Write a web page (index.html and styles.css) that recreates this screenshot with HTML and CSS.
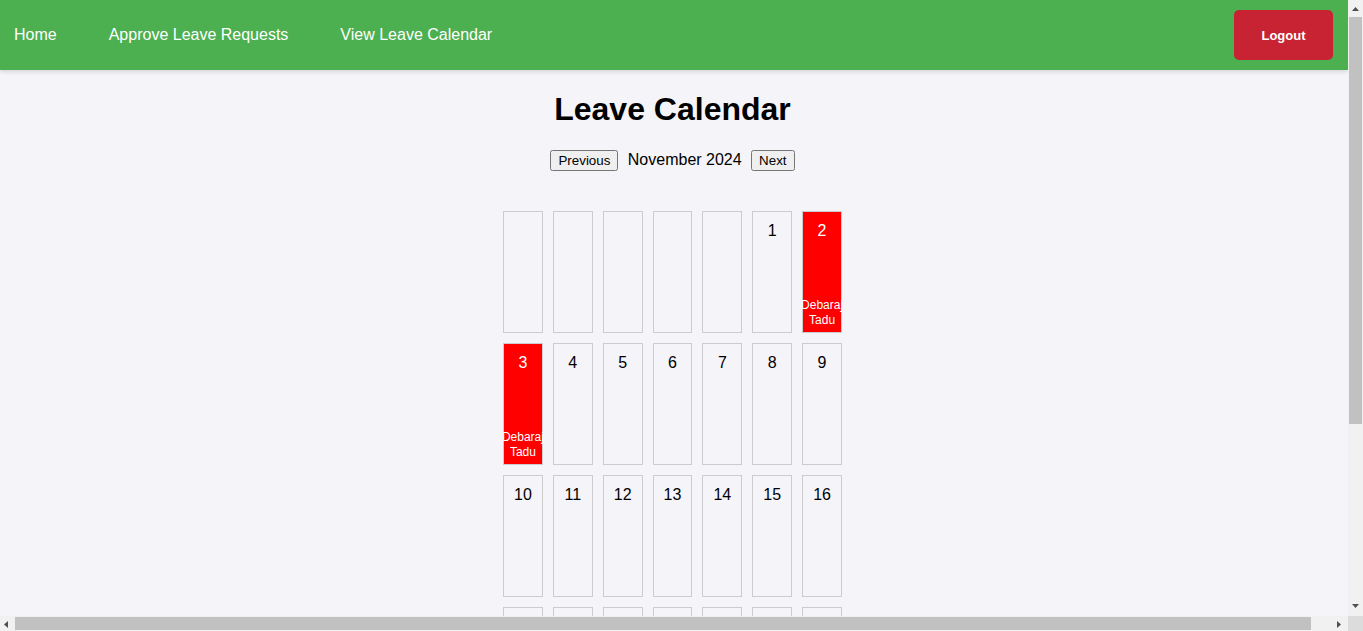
FILE: index.html
```html
<!DOCTYPE html>
<html lang="en">
<head>
<meta charset="utf-8">
<title>Leave Calendar</title>
<link rel="stylesheet" href="styles.css">
</head>
<body>
<nav class="navbar">
  <div class="nav-links">
    <a href="#">Home</a>
    <a href="#">Approve Leave Requests</a>
    <a href="#">View Leave Calendar</a>
  </div>
  <button class="logout">Logout</button>
</nav>
<main class="main">
  <h1 class="title">Leave Calendar</h1>
  <div class="controls">
    <button class="nav-btn">Previous</button>
    <span class="month">November 2024</span>
    <button class="nav-btn">Next</button>
  </div>
  <div class="calendar">
    <div class="day"></div>
    <div class="day"></div>
    <div class="day"></div>
    <div class="day"></div>
    <div class="day"></div>
    <div class="day"><div class="num">1</div></div>
    <div class="day leave"><div class="num">2</div><div class="name">Debaraj Tadu</div></div>
    <div class="day leave"><div class="num">3</div><div class="name">Debaraj Tadu</div></div>
    <div class="day"><div class="num">4</div></div>
    <div class="day"><div class="num">5</div></div>
    <div class="day"><div class="num">6</div></div>
    <div class="day"><div class="num">7</div></div>
    <div class="day"><div class="num">8</div></div>
    <div class="day"><div class="num">9</div></div>
    <div class="day"><div class="num">10</div></div>
    <div class="day"><div class="num">11</div></div>
    <div class="day"><div class="num">12</div></div>
    <div class="day"><div class="num">13</div></div>
    <div class="day"><div class="num">14</div></div>
    <div class="day"><div class="num">15</div></div>
    <div class="day"><div class="num">16</div></div>
    <div class="day"><div class="num">17</div></div>
    <div class="day"><div class="num">18</div></div>
    <div class="day"><div class="num">19</div></div>
    <div class="day"><div class="num">20</div></div>
    <div class="day"><div class="num">21</div></div>
    <div class="day"><div class="num">22</div></div>
    <div class="day"><div class="num">23</div></div>
    <div class="day"><div class="num">24</div></div>
    <div class="day"><div class="num">25</div></div>
    <div class="day"><div class="num">26</div></div>
    <div class="day"><div class="num">27</div></div>
    <div class="day"><div class="num">28</div></div>
    <div class="day"><div class="num">29</div></div>
    <div class="day"><div class="num">30</div></div>
  </div>
</main>

<div class="vscroll" aria-hidden="true">
  <svg class="arrow-up" width="7" height="4" viewBox="0 0 7 4"><polygon points="3.5,0 7,4 0,4" fill="#505050"/></svg>
  <div class="vthumb"></div>
  <svg class="arrow-down" width="7" height="4" viewBox="0 0 7 4"><polygon points="0,0 7,0 3.5,4" fill="#505050"/></svg>
</div>
<div class="hscroll" aria-hidden="true">
  <svg class="arrow-left" width="4" height="7" viewBox="0 0 4 7"><polygon points="4,0 4,7 0,3.5" fill="#505050"/></svg>
  <div class="hthumb"></div>
  <svg class="arrow-right" width="4" height="7" viewBox="0 0 4 7"><polygon points="0,0 4,3.5 0,7" fill="#505050"/></svg>
</div>
<div class="scroll-corner" aria-hidden="true"></div>
</body>
</html>
```
FILE: styles.css
```css
html, body {
  margin: 0;
  padding: 0;
}

body {
  margin-right: 15px;
  background: #f4f4f9;
  font-family: "Liberation Sans", Arial, sans-serif;
  color: #000;
}

.navbar {
  box-sizing: border-box;
  display: flex;
  justify-content: space-between;
  align-items: center;
  width: 100%;
  height: 70px;
  padding: 10px 15px 10px 0;
  background: #4caf50;
  box-shadow: 0 2px 4px rgba(0, 0, 0, 0.12);
}

.nav-links {
  display: flex;
  gap: 24px;
}

.nav-links a {
  color: #fff;
  text-decoration: none;
  font-size: 16px;
  padding: 0 14px;
}

.logout {
  height: 50px;
  width: 99px;
  border: none;
  border-radius: 5px;
  background: #c82333;
  color: #fff;
  font-family: "Liberation Sans", Arial, sans-serif;
  font-size: 13px;
  font-weight: bold;
  padding: 0;
}

.main {
  padding-right: 3px;
  text-align: center;
}

.title {
  font-size: 32px;
  margin: 21.44px 0;
}

.controls {
  margin-bottom: 40px;
}

.nav-btn {
  font-family: "Liberation Sans", Arial, sans-serif;
  font-size: 13.333px;
}

.month {
  font-size: 16px;
  margin: 0 5px;
}

.calendar {
  display: grid;
  grid-template-columns: repeat(7, 39.86px);
  gap: 10px;
  justify-content: center;
}

.day {
  display: flex;
  flex-direction: column;
  align-items: center;
  height: 105px;
  padding: 10px 0 5px;
  border: 1px solid #ccc;
}

.num {
  font-size: 16px;
}

.name {
  flex: none;
  width: 44px;
  margin-top: auto;
  margin-bottom: -1px;
  font-size: 12px;
  line-height: 15px;
  text-align: center;
}

.leave {
  background: #ff0000;
  color: #fff;
}

/* browser scrollbars as drawn in the reference */
.vscroll {
  position: fixed;
  top: 0;
  right: 0;
  width: 15px;
  height: 616px;
  background: #f1f1f1;
}

.vthumb {
  position: absolute;
  left: 1px;
  top: 17px;
  width: 13px;
  height: 407px;
  background: #c1c1c1;
}

.arrow-up {
  position: absolute;
  left: 4px;
  top: 7px;
}

.arrow-down {
  position: absolute;
  left: 4px;
  top: 604px;
}

.hscroll {
  position: fixed;
  left: 0;
  bottom: 0;
  width: 1348px;
  height: 15px;
  background: #f1f1f1;
}

.hthumb {
  position: absolute;
  left: 15px;
  top: 1px;
  width: 1296px;
  height: 13px;
  background: #c1c1c1;
}

.arrow-left {
  position: absolute;
  left: 4px;
  top: 5px;
}

.arrow-right {
  position: absolute;
  left: 1337px;
  top: 5px;
}

.scroll-corner {
  position: fixed;
  right: 0;
  bottom: 0;
  width: 15px;
  height: 15px;
  background: #dcdcdc;
}
```
